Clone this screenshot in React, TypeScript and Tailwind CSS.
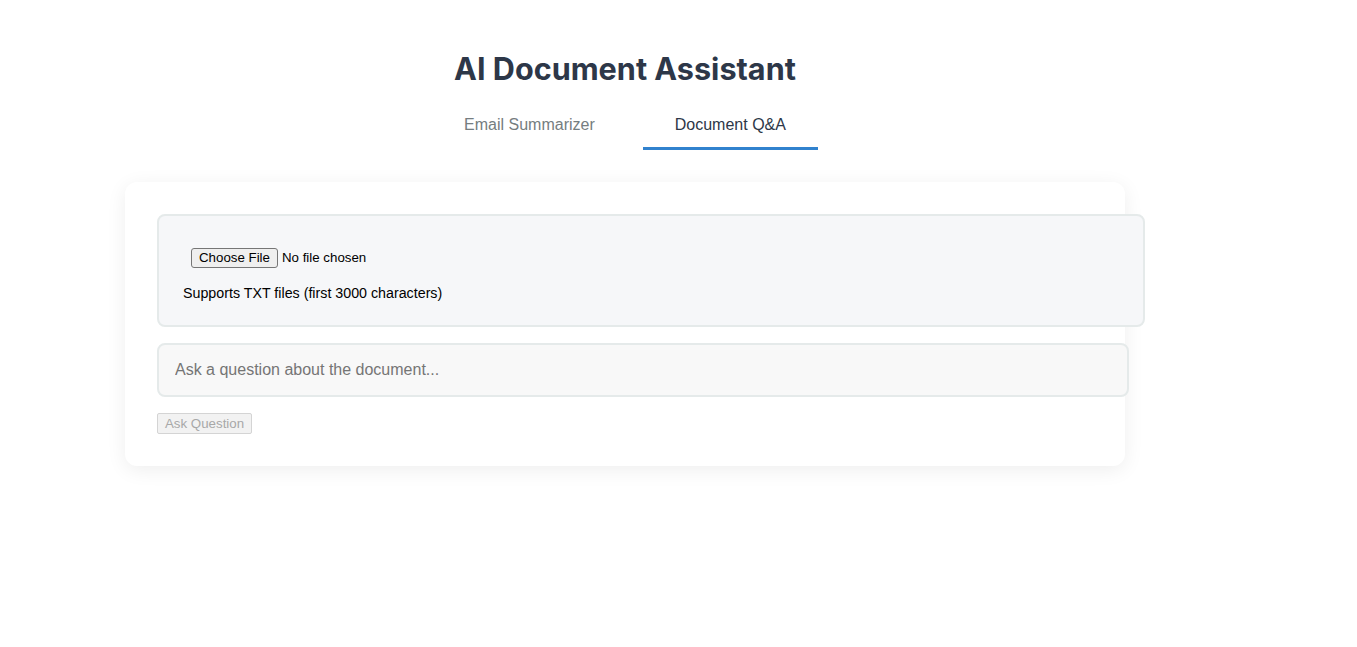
import { useState } from 'react';

const tabs = ['Email Summarizer', 'Document Q&A'];

export default function App() {
  const [active, setActive] = useState(1);
  const [question, setQuestion] = useState('');

  return (
    <div className="min-h-screen bg-white font-['Liberation_Sans',Arial,sans-serif]">
      <div className="ml-[125px] w-[1000px] pt-[51px]">
        <h1 className="text-center font-['Inter',sans-serif] text-[30.6px] leading-[36px] font-bold text-[#2d3748]">
          AI Document Assistant
        </h1>

        <div className="mt-4 flex justify-center gap-4">
          {tabs.map((t, i) => (
            <button
              key={t}
              onClick={() => setActive(i)}
              className={
                i === active
                  ? 'border-b-[3px] border-[#3182ce] px-8 pt-3 pb-3 text-[16px] leading-[20px] text-[#2d3748]'
                  : 'border-b-[3px] border-transparent px-8 pt-3 pb-3 text-[16px] leading-[20px] text-[#757d80]'
              }
            >
              {t}
            </button>
          ))}
        </div>

        <div className="mt-8 rounded-xl bg-white p-8 shadow-[0_4px_20px_rgba(0,0,0,0.07)]">
          {/* upload area */}
          <div className="box-content w-full rounded-lg border-2 border-[#e5eaea] bg-[#f6f7f9] p-6">
            <input
              type="file"
              accept=".txt"
              className="block p-2 text-[13.3px] leading-[20px] text-black file:mr-[4px] file:h-[20px] file:rounded-[3px] file:border file:border-[#767676] file:bg-[#efefef] file:px-[7px] file:text-[13.3px] file:leading-[18px] file:text-black"
            />
            <p className="mt-[9px] text-[14.25px] leading-[16px] text-black">
              Supports TXT files (first 3000 characters)
            </p>
          </div>

          <input
            type="text"
            value={question}
            onChange={(e) => setQuestion(e.target.value)}
            placeholder="Ask a question about the document..."
            className="mt-4 box-content block w-full rounded-lg border-2 border-[#e5eaea] bg-[#f8f8f8] px-4 py-4 text-[16px] leading-[18px] text-[#2d3748] outline-none placeholder:text-[#757575]"
          />

          <button
            disabled={!question}
            className="mt-4 block h-[21px] rounded-[2px] border border-[#d4d4d4] bg-[#f2f2f2] px-[7px] text-[13.3px] leading-[19px] text-[#a8a8a8]"
          >
            Ask Question
          </button>
        </div>
      </div>
    </div>
  );
}
